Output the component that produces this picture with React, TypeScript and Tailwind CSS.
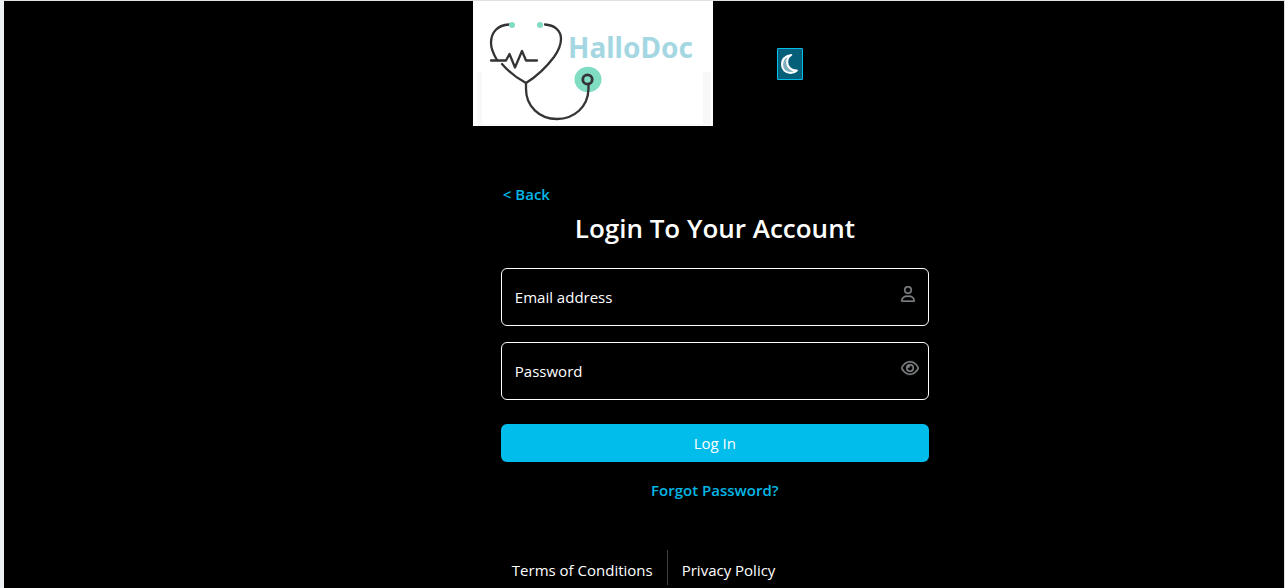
import { useState } from "react";
import { FaRegEye, FaRegUser } from "react-icons/fa6";

function Logo() {
  return (
    <svg viewBox="0 0 240 125" className="block h-[125px] w-[240px] bg-white" role="img" aria-label="HalloDoc">
      <rect x="4" y="71" width="5" height="54" fill="#f8f8f8" />
      <rect x="230" y="71" width="8" height="54" fill="#f8f8f8" />
      <rect x="4" y="123" width="234" height="2" fill="#fafafa" />
      <ellipse cx="115" cy="78.500" rx="13.500" ry="12.800" fill="#80dcc3" />
      <g fill="none" stroke="#353335" strokeWidth="2.300" strokeLinecap="round" strokeLinejoin="round">
        <path d="M36 23.500C25 24 18 31 18 42c0 7 3 12 6 17M29 63c6 7 15 14 24 19 8-5 19-14 28-26 5-7 7-12 7-18 0-9-7-14-16-14.500" />
        <path d="M18 59.500h15l3.500-6.500 5.500 13.500 7-16.500 4 9.500h11" />
        <path d="M53 82v6c0 17 13 30 31 30 17 0 31-12 31.500-30V83" />
        <circle cx="114.500" cy="78.500" r="4.700" strokeWidth="2.800" />
      </g>
      <circle cx="39" cy="24" r="3" fill="#80dcc3" />
      <circle cx="67" cy="24" r="3" fill="#80dcc3" />
      <text x="95" y="57" fill="#a5d7e3" fontSize="28" fontWeight="700" fontFamily="'Noto Sans', sans-serif">
        HalloDoc
      </text>
    </svg>
  );
}

function Moon() {
  return (
    <svg viewBox="0 0 17 20" className="h-5 w-[17px]" aria-hidden="true">
      <path
        d="M10.200 1C4.500 2 1 5.500 1 10.500 1 15.500 4.500 19 9.500 19c2.600 0 4.800-.9 6.300-2.500-5.300.2-9.600-3-9.600-8.500 0-3 1.400-5.500 4-7z"
        fill="#7fb0bf"
        stroke="#fff"
        strokeWidth="2"
        strokeLinejoin="round"
      />
    </svg>
  );
}

const fieldBox = "relative flex h-[58px] items-center rounded-md border border-white focus-within:border-[#00bdeb]";
const fieldInput = "peer h-full min-w-0 flex-1 bg-transparent px-3 pt-4 text-white outline-none";
const fieldLabel =
  "pointer-events-none absolute inset-y-0 left-0 flex items-center px-[13px] peer-focus:items-start peer-focus:text-xs peer-[:not(:placeholder-shown)]:items-start peer-[:not(:placeholder-shown)]:text-xs";

export default function App() {
  const [visible, setVisible] = useState(false);

  return (
    <div className="min-h-screen border-t border-r border-l-4 border-t-[#dee1e3] border-r-[#dee1e3] border-l-[#eef1f4] bg-black font-['Open_Sans',sans-serif] text-[15px] leading-6 text-white">
      <div className="grid grid-cols-[589fr_minmax(0,484px)_411fr]">
        <div className="col-start-2">
          <header className="flex items-start gap-16">
            <Logo />
            <button
              type="button"
              aria-label="Toggle dark mode"
              className="mt-[47px] flex h-8 w-[26px] items-center justify-center rounded-[1px] border border-[#00bdeb] bg-[#055f78]"
            >
              <Moon />
            </button>
          </header>

          <main className="px-7 pt-14">
            <a href="#back" className="ml-0.5 block w-fit font-semibold text-[#00b6e6]">
              &lt; Back
            </a>
            <h1 className="mt-1 text-center text-[26px] leading-9 font-semibold">Login To Your Account</h1>
            <form className="mt-[22px]" onSubmit={(e) => e.preventDefault()}>
              <div className={fieldBox}>
                <input id="email" type="email" placeholder=" " className={fieldInput} />
                <label htmlFor="email" className={fieldLabel}>Email address</label>
                <FaRegUser size={16} stroke="currentColor" strokeWidth={8} className="mr-3 mb-1.5 text-[#7c8083]" />
              </div>
              <div className={`mt-4 ${fieldBox}`}>
                <input id="password" type={visible ? "text" : "password"} placeholder=" " className={fieldInput} />
                <label htmlFor="password" className={fieldLabel}>Password</label>
                <button type="button" aria-label="Show password" onClick={() => setVisible(!visible)} className="mr-[9px] mb-1.5">
                  <FaRegEye size={18} stroke="currentColor" strokeWidth={8} className="block text-[#7c8083]" />
                </button>
              </div>
              <button type="submit" className="mt-6 h-[38px] w-full rounded-md bg-[#00bdeb]">
                Log In
              </button>
            </form>
            <a href="#forgot" className="mx-auto mt-4 block w-fit font-semibold text-[#00b6e6]">
              Forgot Password?
            </a>
          </main>

          <footer className="mt-12 flex h-[35px] items-center px-[39px]">
            <a href="#terms" className="mt-1">Terms of Conditions</a>
            <span className="ml-3.5 h-full w-px bg-[#3d4145]" />
            <a href="#privacy" className="mt-1 ml-3.5">Privacy Policy</a>
          </footer>
        </div>
      </div>
    </div>
  );
}
